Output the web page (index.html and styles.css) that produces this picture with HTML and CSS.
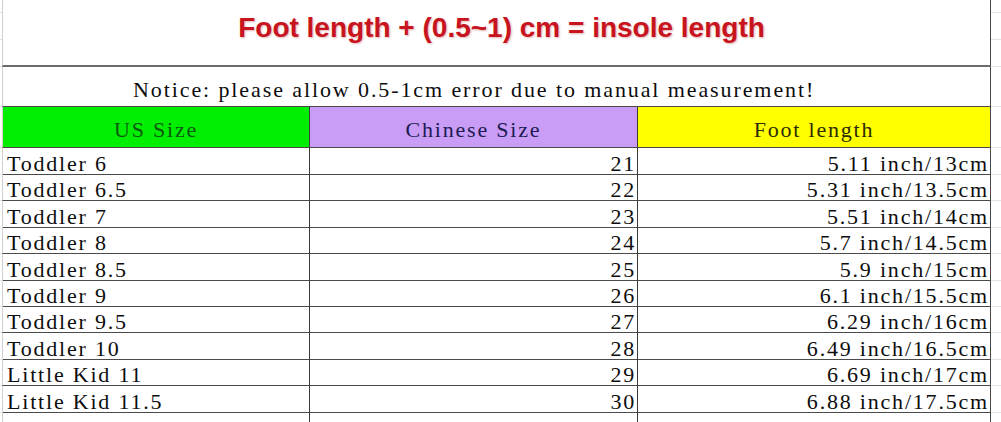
FILE: index.html
```html
<!DOCTYPE html>
<html>
<head>
<meta charset="utf-8">
<link rel="stylesheet" href="styles.css">
</head>
<body>
<div class="sheet">
  <div class="row title-row">
    <div class="gutter stack"><i></i><i></i><i></i></div>
    <div class="span title"><h1>Foot length + (0.5~1) cm = insole length</h1></div>
    <div class="gutter stack"><i></i><i></i><i></i></div>
  </div>
  <div class="row notice-row">
    <div class="gutter"></div>
    <div class="span notice">Notice: please allow 0.5-1cm error due to manual measurement!</div>
    <div class="gutter"></div>
  </div>
  <div class="row head">
    <div class="gutter"></div>
    <div class="cell c1 green">US Size</div>
    <div class="cell c2 purple">Chinese Size</div>
    <div class="cell c3 yellow">Foot length</div>
    <div class="gutter"></div>
  </div>
  <div class="row data"><div class="gutter"></div><div class="cell c1">Toddler 6</div><div class="cell c2">21</div><div class="cell c3">5.11 inch/13cm</div><div class="gutter"></div></div>
  <div class="row data"><div class="gutter"></div><div class="cell c1">Toddler 6.5</div><div class="cell c2">22</div><div class="cell c3">5.31 inch/13.5cm</div><div class="gutter"></div></div>
  <div class="row data"><div class="gutter"></div><div class="cell c1">Toddler 7</div><div class="cell c2">23</div><div class="cell c3">5.51 inch/14cm</div><div class="gutter"></div></div>
  <div class="row data"><div class="gutter"></div><div class="cell c1">Toddler 8</div><div class="cell c2">24</div><div class="cell c3">5.7 inch/14.5cm</div><div class="gutter"></div></div>
  <div class="row data"><div class="gutter"></div><div class="cell c1">Toddler 8.5</div><div class="cell c2">25</div><div class="cell c3">5.9 inch/15cm</div><div class="gutter"></div></div>
  <div class="row data"><div class="gutter"></div><div class="cell c1">Toddler 9</div><div class="cell c2">26</div><div class="cell c3">6.1 inch/15.5cm</div><div class="gutter"></div></div>
  <div class="row data"><div class="gutter"></div><div class="cell c1">Toddler 9.5</div><div class="cell c2">27</div><div class="cell c3">6.29 inch/16cm</div><div class="gutter"></div></div>
  <div class="row data"><div class="gutter"></div><div class="cell c1">Toddler 10</div><div class="cell c2">28</div><div class="cell c3">6.49 inch/16.5cm</div><div class="gutter"></div></div>
  <div class="row data"><div class="gutter"></div><div class="cell c1">Little Kid 11</div><div class="cell c2">29</div><div class="cell c3">6.69 inch/17cm</div><div class="gutter"></div></div>
  <div class="row data"><div class="gutter"></div><div class="cell c1">Little Kid 11.5</div><div class="cell c2">30</div><div class="cell c3">6.88 inch/17.5cm</div><div class="gutter"></div></div>
  <div class="row tail"><div class="gutter"></div><div class="cell c1"></div><div class="cell c2"></div><div class="cell c3"></div><div class="gutter"></div></div>
</div>
</body>
</html>
```
FILE: styles.css
```css
body {
  margin: 0;
  background: #fff;
}
.sheet {
  width: 1001px;
  height: 422px;
  overflow: hidden;
  font-family: "Liberation Serif", "Times New Roman", serif;
  font-size: 22px;
  letter-spacing: 1.8px;
  color: #0d0d0d;
}
.row {
  display: grid;
  grid-template-columns: 2px 307px 328px 354px 10px;
}
.row > div {
  box-sizing: border-box;
}
.gutter {
  border-bottom: 1px solid #e4e4e4;
}
.stack {
  display: flex;
  flex-direction: column;
  border-bottom: none;
}
.stack i {
  display: block;
  box-sizing: border-box;
  height: 27px;
  border-bottom: 1px solid #e4e4e4;
}
.stack i:first-child {
  height: 13px;
}
.span {
  grid-column: 2 / 5;
  border-left: 1px solid #cfcfcf;
  border-right: 1px solid #474747;
}
.title-row {
  height: 67px;
}
.title {
  border-bottom: 2px solid #6b6b6b;
  display: flex;
  justify-content: center;
  padding-left: 10px;
}
.title h1 {
  margin: 0;
  padding-top: 14px;
  font: bold 28px/28px "Liberation Sans", Arial, sans-serif;
  letter-spacing: 0;
  color: #c8141e;
  text-shadow: 1px 1px 2px rgba(170, 40, 40, 0.35);
}
.notice-row {
  height: 40px;
}
.notice {
  border-bottom: 1px solid #4a4a4a;
  padding: 12px 0 0 130px;
  line-height: 21px;
  letter-spacing: 1.9px;
  white-space: nowrap;
}
.cell {
  border-bottom: 1px solid #4a4a4a;
  line-height: 21px;
  white-space: nowrap;
}
.c1 {
  border-left: 1px solid #cfcfcf;
  padding-left: 4px;
}
.c2 {
  border-left: 1px solid #3a3a3a;
  text-align: right;
  padding-right: 1px;
}
.c3 {
  border-left: 1px solid #3a3a3a;
  border-right: 1px solid #474747;
  text-align: right;
  padding-right: 1px;
}
.head {
  height: 41px;
}
.head .cell {
  text-align: center;
  padding: 12px 0 0;
}
.green {
  background: #00ee00;
  color: #0b5a10;
}
.purple {
  background: #c99cf6;
  color: #1c1c52;
}
.yellow {
  background: #ffff00;
  color: #2b2b05;
}
.data {
  height: 26.4px;
}
.data .cell {
  padding-top: 5px;
}
.tail {
  height: 12px;
}
.tail .cell,
.tail .gutter {
  border-bottom: none;
}
```
